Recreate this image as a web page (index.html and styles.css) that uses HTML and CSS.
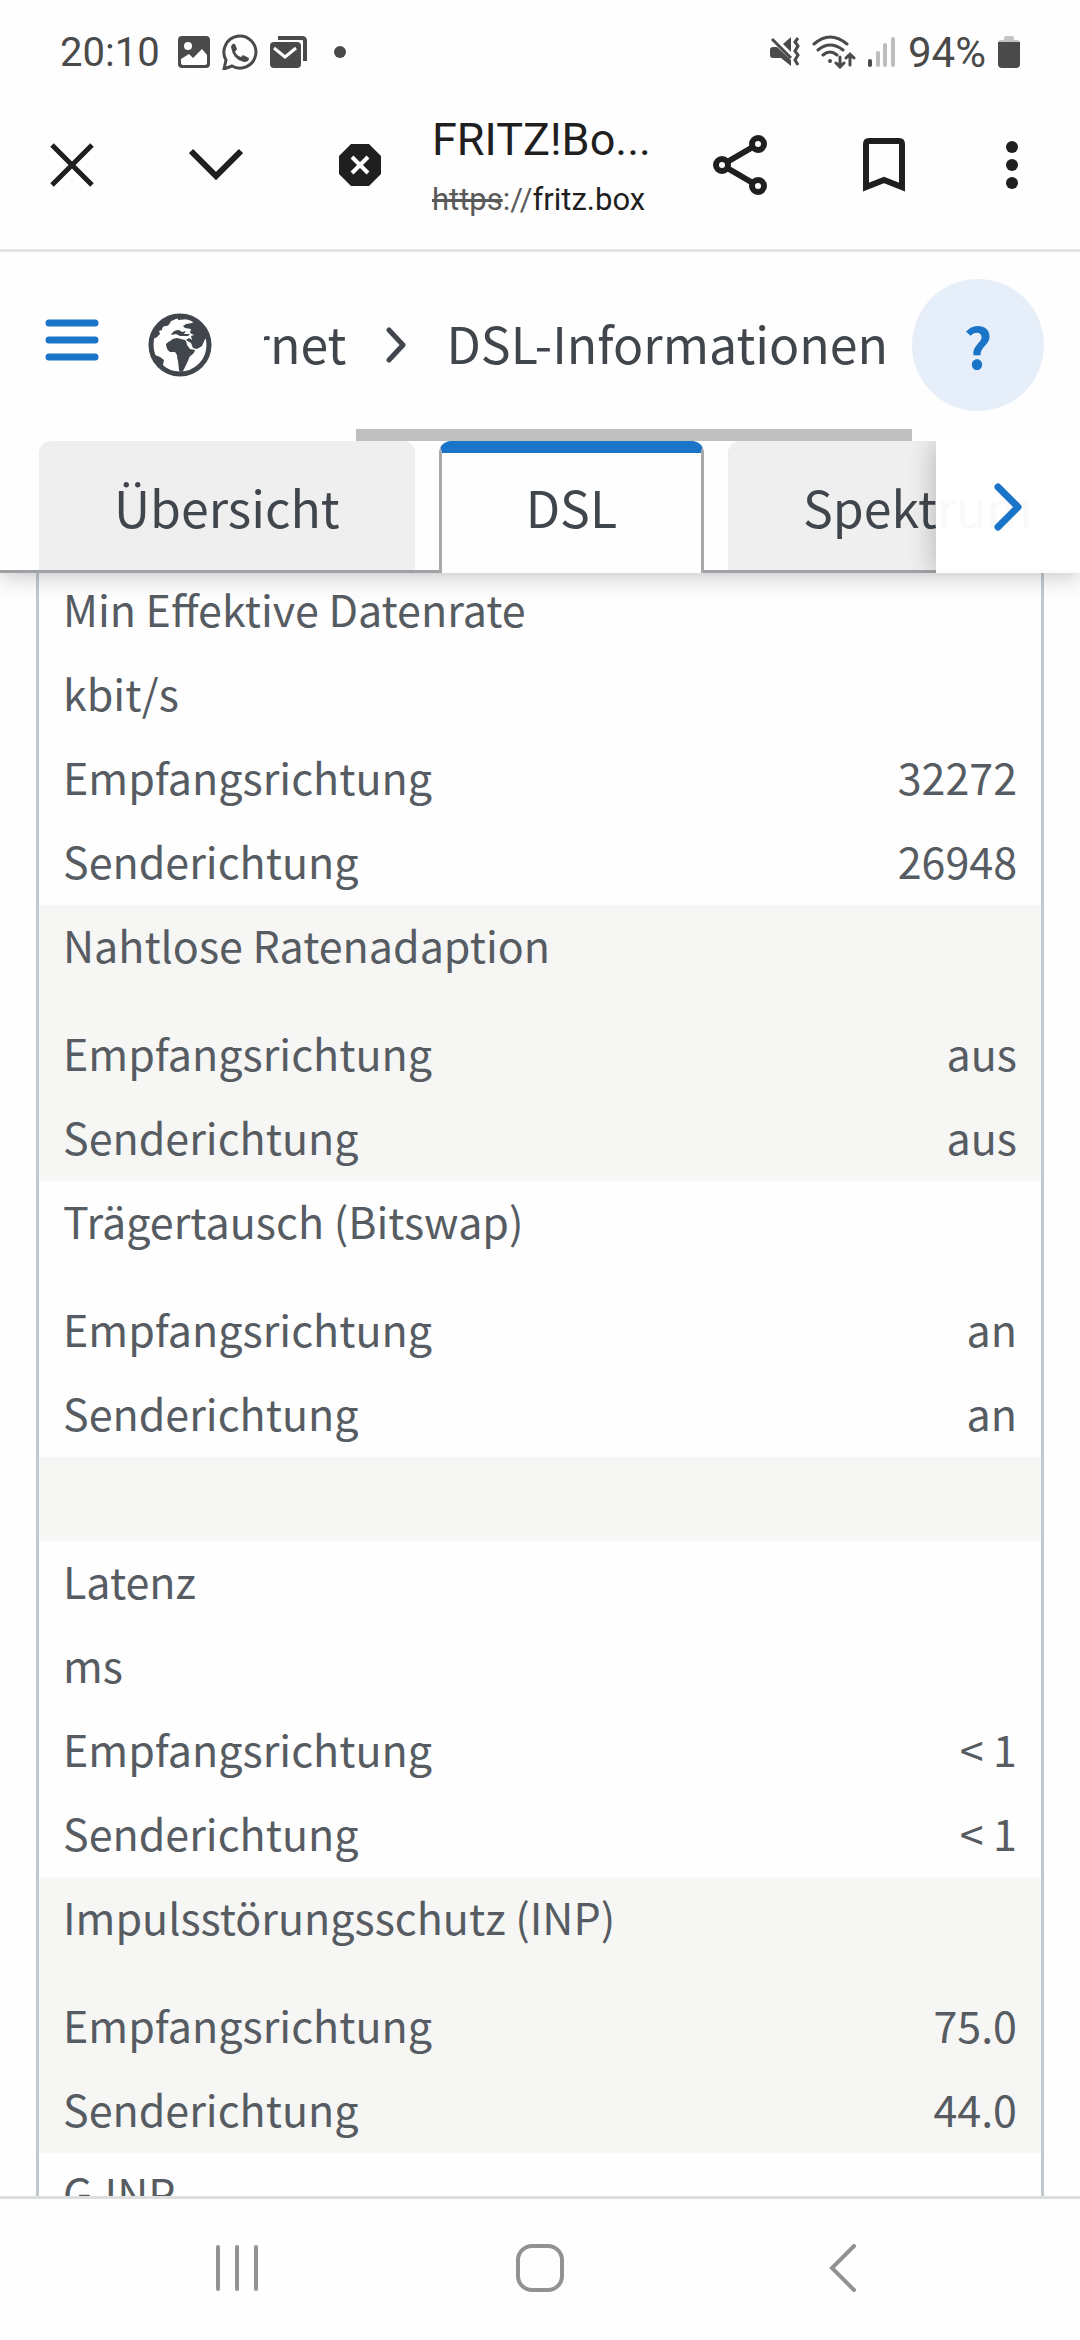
FILE: index.html
```
<!DOCTYPE html>
<html lang="de">
<head>
  <meta charset="UTF-8">
  <meta name="viewport" content="width=device-width, initial-scale=1">
  <title>FRITZ!Box - DSL-Informationen</title>
  <link rel="stylesheet" href="styles.css">
</head>
<body>

  <!-- Status bar -->
  <div class="status-bar">
    <div class="status-left">
      <span class="clock">20:10</span>
      <svg width="32" height="32" viewBox="0 0 32 32">
        <path fill="#4a4a4a" fill-rule="evenodd" d="M4 0h24a4 4 0 0 1 4 4v24a4 4 0 0 1-4 4H4a4 4 0 0 1-4-4V4a4 4 0 0 1 4-4zM10 6a4 4 0 1 0 0 8 4 4 0 0 0 0-8zM3 23v4q0 2 2 2h22q2 0 2-2v-8l-5-6-9 9-4-4z"/>
      </svg>
      <svg width="36" height="36" viewBox="0 0 36 36">
        <path d="M2 35 4 26A16 16 0 1 1 10 32z" fill="none" stroke="#4a4a4a" stroke-width="3"/>
        <path fill="#4a4a4a" d="M9 13q1-4 4-3l2 5-2 3q2 4 6 5l2-2 6 3q0 4-5 4Q11 26 9 13z"/>
      </svg>
      <svg width="38" height="34" viewBox="0 0 38 34">
        <path d="M8 3h24q3 0 3 3v20" fill="none" stroke="#4a4a4a" stroke-width="4"/>
        <rect y="7" width="31" height="26" rx="4" fill="#4a4a4a"/>
        <path d="M4 13l11 9 11-9" fill="none" stroke="#fff" stroke-width="3"/>
      </svg>
      <span class="status-dot"></span>
    </div>
    <div class="status-right">
      <svg width="30" height="30" viewBox="0 0 30 30">
        <g fill="#4a4a4a">
          <path d="M0 13q0-3 3-3h4l14 13v6l-10-8H3q-3 0-3-3z"/>
          <path d="M21 0v15l-8-8z"/>
        </g>
        <path d="M2 2l19 19M28 1l-3 4 3 4-3 5 3 4-3 5 3 5" fill="none" stroke="#4a4a4a" stroke-width="3"/>
      </svg>
      <svg width="44" height="34" viewBox="0 0 44 34">
        <g fill="none" stroke="#4a4a4a" stroke-width="3" stroke-linecap="round">
          <path d="M2 9q16-14 33 0M6 15q12-10 25 0M11 20q7-6 14 0"/>
          <path d="M28 22v10M24 28l4 4 4-4M38 30V19M34 23l4-4 4 4"/>
        </g>
        <circle cx="18" cy="26" r="2" fill="#4a4a4a"/>
      </svg>
      <svg width="28" height="30" viewBox="0 0 28 30">
        <path d="M2 24v4" stroke="#4a4a4a" stroke-width="4" stroke-linecap="round"/>
        <path d="M10 16v12M17 8v20M25 2v26" stroke="#bdbdbd" stroke-width="4" stroke-linecap="round"/>
      </svg>
      <span>94%</span>
      <svg width="22" height="32" viewBox="0 0 22 32">
        <path d="M0 10V7q0-3 3-3h3V2q0-2 2-2h6q2 0 2 2v2h3q3 0 3 3v3z" fill="#c4c4c4"/>
        <path d="M0 6h22v22q0 4-4 4H4q-4 0-4-4z" fill="#4a4a4a"/>
      </svg>
    </div>
  </div>

  <!-- Browser toolbar -->
  <div class="toolbar">
    <button class="tool" aria-label="Schließen">
      <svg width="44" height="44" viewBox="0 0 44 44"><path d="M2 2l40 40M42 2L2 42" stroke="#1f1f1f" stroke-width="5"/></svg>
    </button>
    <button class="tool" aria-label="Minimieren">
      <svg width="54" height="34" viewBox="0 0 54 34"><path d="M2 3l25 25L52 3" fill="none" stroke="#1f1f1f" stroke-width="6"/></svg>
    </button>
    <button class="tool" aria-label="Nicht sicher">
      <svg width="42" height="42" viewBox="0 0 42 42">
        <path d="M12 0h18l12 12v18L30 42H12L0 30V12z" fill="#1f1f1f"/>
        <path d="M13 13l16 16M29 13L13 29" stroke="#fff" stroke-width="4"/>
      </svg>
    </button>
    <div class="page-info">
      <div class="page-title">FRITZ!Bo...</div>
      <div class="page-url"><s>https</s><span>://</span>fritz.box</div>
    </div>
    <button class="tool" aria-label="Teilen">
      <svg width="54" height="60" viewBox="0 0 54 60">
        <g fill="none" stroke="#1f1f1f" stroke-width="6">
          <path d="M9 30L45 9M9 30l36 21"/>
          <g fill="#fff"><circle cx="9" cy="30" r="6"/><circle cx="45" cy="9" r="6"/><circle cx="45" cy="51" r="6"/></g>
        </g>
      </svg>
    </button>
    <button class="tool" aria-label="Lesezeichen">
      <svg width="42" height="54" viewBox="0 0 42 54"><path d="M3 49V6q0-3 3-3h30q3 0 3 3v43l-18-7z" fill="none" stroke="#1f1f1f" stroke-width="6"/></svg>
    </button>
    <button class="tool more" aria-label="Mehr">
      <svg width="12" height="48" viewBox="0 0 12 48"><g fill="#1f1f1f"><circle cx="6" cy="6" r="6"/><circle cx="6" cy="24" r="6"/><circle cx="6" cy="42" r="6"/></g></svg>
    </button>
  </div>

  <header>
    <div class="head-row">
      <button class="menu-btn" aria-label="Menü">
        <svg width="54" height="42" viewBox="0 0 54 42"><path d="M4 4h46M4 21h46M4 38h46" stroke="#1a74c8" stroke-width="7" stroke-linecap="round"/></svg>
      </button>
      <svg class="globe" width="64" height="64" viewBox="0 0 64 64">
        <circle cx="32" cy="32" r="29" fill="#fff" stroke="#41464c" stroke-width="5"/>
        <g fill="#41464c">
          <path d="M4 24Q10 6 30 3q-2 4-7 5-2 5-5 5-4 0-4 4l-3 1 1 3-4 4z"/>
          <path d="M30 3q26 2 31 24l-4-1-3 7-5 3-4-1-2-5-5-3 3-2 3 2-1-4 3-1-4-2 1-4-6-1-2-2 3-2 6-1 3-2-6-2-11 1z"/>
          <path d="M23 22q2-5 8-5l3 2 4-1-2 3h6l-2 2h-8l-4-2z"/>
          <path d="M18 31q2-2 4-3 3-3 7-3l8 2q2 2 2 5l3 4 5 1q-1 4-5 6l-3 7-4 8-2 1q-2 0-2-2l-1-9q-1-3-1-6l-2-3h-5q-4-3-4-8z"/>
          <path d="M3 37l4 5 5 2 4 3-1 5 2 4-7-5z"/>
        </g>
      </svg>
      <nav class="breadcrumb">
        <a href="#">Internet</a>
        <svg width="20" height="36" viewBox="0 0 20 36"><path d="M3 3l14 15L3 33" fill="none" stroke="#41464c" stroke-width="5" stroke-linecap="round" stroke-linejoin="round"/></svg>
        <a href="#">DSL-Informationen</a>
      </nav>
      <button class="help-btn" aria-label="Hilfe">?</button>
    </div>
    <div class="tabs">
      <div class="scroll-thumb"></div>
      <a class="tab" href="#">Übersicht</a>
      <a class="tab active" href="#">DSL</a>
      <a class="tab" href="#">Spektrum</a>
      <button class="tabs-next" aria-label="Weiter">
        <svg width="28" height="48" viewBox="0 0 28 48"><path d="M4 4l20 20L4 44" fill="none" stroke="#1a74c8" stroke-width="7" stroke-linecap="round" stroke-linejoin="round"/></svg>
      </button>
    </div>
  </header>

  <main>
    <table>
      <tbody>
        <tr><th colspan="2">Min Effektive Datenrate</th></tr>
        <tr><td colspan="2">kbit/s</td></tr>
        <tr><td>Empfangsrichtung</td><td>32272</td></tr>
        <tr><td>Senderichtung</td><td>26948</td></tr>
      </tbody>
      <tbody>
        <tr><th colspan="2">Nahtlose Ratenadaption</th></tr>
        <tr class="no-unit"><td colspan="2"></td></tr>
        <tr><td>Empfangsrichtung</td><td>aus</td></tr>
        <tr><td>Senderichtung</td><td>aus</td></tr>
      </tbody>
      <tbody>
        <tr><th colspan="2">Trägertausch (Bitswap)</th></tr>
        <tr class="no-unit"><td colspan="2"></td></tr>
        <tr><td>Empfangsrichtung</td><td>an</td></tr>
        <tr><td>Senderichtung</td><td>an</td></tr>
      </tbody>
      <tbody>
        <tr><td colspan="2"></td></tr>
      </tbody>
      <tbody>
        <tr><th colspan="2">Latenz</th></tr>
        <tr><td colspan="2">ms</td></tr>
        <tr><td>Empfangsrichtung</td><td>&lt; 1</td></tr>
        <tr><td>Senderichtung</td><td>&lt; 1</td></tr>
      </tbody>
      <tbody>
        <tr><th colspan="2">Impulsstörungsschutz (INP)</th></tr>
        <tr class="no-unit"><td colspan="2"></td></tr>
        <tr><td>Empfangsrichtung</td><td>75.0</td></tr>
        <tr><td>Senderichtung</td><td>44.0</td></tr>
      </tbody>
      <tbody>
        <tr><th colspan="2">G.INP</th></tr>
      </tbody>
    </table>
  </main>

  <!-- Android navigation -->
  <div class="nav-bar">
    <button aria-label="Letzte Apps">
      <svg width="44" height="48" viewBox="0 0 44 48"><path d="M3 3v42M22 3v42M41 3v42" stroke="#929292" stroke-width="4" stroke-linecap="round"/></svg>
    </button>
    <button aria-label="Startseite">
      <svg width="48" height="48" viewBox="0 0 48 48"><rect x="2" y="2" width="44" height="44" rx="14" fill="none" stroke="#929292" stroke-width="4"/></svg>
    </button>
    <button aria-label="Zurück">
      <svg width="28" height="48" viewBox="0 0 28 48"><path d="M25 2L3 24l22 22" fill="none" stroke="#929292" stroke-width="4" stroke-linecap="round"/></svg>
    </button>
  </div>

</body>
</html>
```
FILE: styles.css
```
* {
  box-sizing: border-box;
}

body {
  margin: 0;
  height: 100vh;
  display: flex;
  flex-direction: column;
  font-family: "Noto Sans CJK SC", "Open Sans", sans-serif;
  background: #fefefe;
  color: #41464c;
}

button {
  padding: 0;
  border: none;
  background: none;
  font-family: inherit;
  color: inherit;
  cursor: pointer;
}

a {
  color: inherit;
  text-decoration: none;
}

svg {
  display: block;
  flex-shrink: 0;
}

/* Status bar */
.status-bar {
  display: flex;
  justify-content: space-between;
  align-items: center;
  height: 104px;
  padding: 0 60px;
  font-family: Roboto, sans-serif;
  font-size: 40px;
  color: #4a4a4a;
}

.status-left,
.status-right {
  display: flex;
  align-items: center;
  gap: 12px;
}

.clock {
  margin-right: 6px;
}

.status-dot {
  width: 12px;
  height: 12px;
  margin-left: 14px;
  border-radius: 50%;
  background: #4a4a4a;
}

.status-right {
  font-size: 42px;
}

/* Browser toolbar */
.toolbar {
  display: flex;
  align-items: center;
  height: 148px;
  padding: 0 12px 24px 0;
  border-bottom: 3px solid #e3e3e3;
  font-family: Roboto, sans-serif;
  color: #1f1f1f;
}

.tool {
  display: flex;
  justify-content: center;
  align-items: center;
  width: 144px;
  height: 110px;
}

.tool.more {
  width: 112px;
}

.page-info {
  flex: 1;
  min-width: 0;
  white-space: nowrap;
}

.page-title {
  font-size: 45px;
  line-height: 70px;
}

.page-url {
  font-size: 31px;
  line-height: 50px;
}

.page-url s,
.page-url span {
  color: #5a5a5a;
}

/* Page header */
header {
  position: relative;
  z-index: 1;
  background: #fefefe;
  box-shadow: 0 0 24px rgba(65, 70, 76, 0.4);
  clip-path: inset(0 0 -40px 0);
}

.head-row {
  display: flex;
  align-items: center;
  height: 189px;
  padding: 0 36px 4px 45px;
}

.menu-btn {
  padding-bottom: 10px;
}

.globe {
  margin-left: 49px;
}

.breadcrumb {
  flex: 1;
  min-width: 0;
  display: flex;
  justify-content: flex-end;
  align-items: center;
  gap: 40px;
  margin-left: 52px;
  padding-right: 24px;
  overflow: hidden;
  font-size: 50px;
  line-height: 72px;
  white-space: nowrap;
}

.breadcrumb a {
  padding-bottom: 6px;
}

.help-btn {
  width: 132px;
  height: 132px;
  border-radius: 50%;
  background: #e6eff9;
  color: #1a74c8;
  font-size: 56px;
  line-height: 120px;
  font-weight: bold;
}

.tabs {
  position: relative;
  display: flex;
  gap: 24px;
  height: 132px;
  padding-left: 39px;
  border-bottom: 3px solid #9fa1a4;
}

.scroll-thumb {
  position: absolute;
  top: -12px;
  left: 33%;
  right: 168px;
  height: 12px;
  background: #bfbfbf;
}

.tab {
  padding: 0 75px;
  height: 129px;
  border-radius: 12px 12px 0 0;
  background: #efefef;
  font-size: 50px;
  line-height: 130px;
  white-space: nowrap;
}

.tab.active {
  height: 132px;
  padding: 0 84px;
  border: 3px solid #a7a8aa;
  border-top: 12px solid #1a74c8;
  border-bottom: none;
  background: #fefefe;
  line-height: 106px;
}

.tabs-next {
  position: absolute;
  top: 0;
  right: 0;
  width: 144px;
  height: 132px;
  display: flex;
  justify-content: center;
  align-items: center;
  background: rgba(255, 255, 255, 0.97);
  box-shadow: -4px 0 24px rgba(0, 0, 0, 0.2);
  clip-path: inset(0 0 0 -30px);
}

/* DSL values */
main {
  flex: 1;
  min-height: 0;
  padding: 0 36px;
  overflow-y: auto;
  scrollbar-width: none;
}

table {
  width: 100%;
  margin-top: -4px;
  border-left: 3px solid #bfcad0;
  border-right: 3px solid #bfcad0;
  border-spacing: 0;
  font-size: 43px;
  line-height: 64px;
  color: #565c62;
}

tbody:nth-child(even) {
  background: #f6f6f5;
}

th,
td {
  height: 84px;
  padding: 0 24px 6px;
  font-weight: normal;
  text-align: left;
}

td + td {
  text-align: right;
}

.no-unit td {
  height: 24px;
}

/* Android navigation */
.nav-bar {
  display: flex;
  justify-content: space-around;
  height: 144px;
  padding: 0 86px 4px;
  border-top: 3px solid #dedede;
}

.nav-bar button {
  display: flex;
  justify-content: center;
  align-items: center;
  width: 144px;
}
```
